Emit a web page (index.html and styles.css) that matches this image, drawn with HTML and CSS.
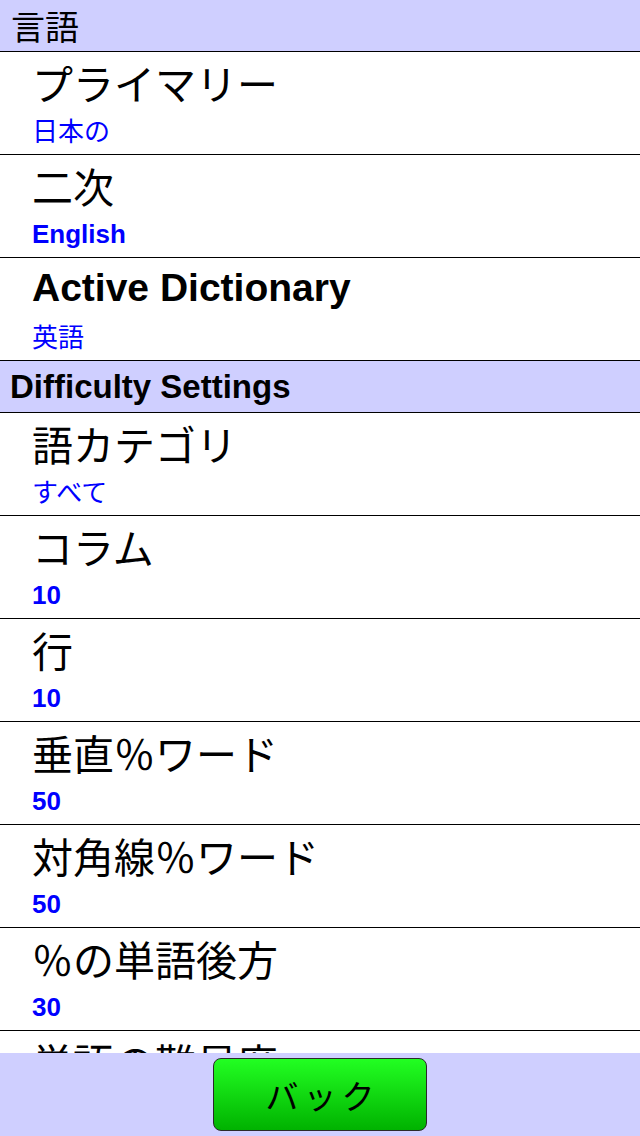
FILE: index.html
```html
<!DOCTYPE html>
<html lang="ja">
<head>
<meta charset="utf-8">
<title>Settings</title>
<link rel="stylesheet" href="styles.css">
</head>
<body>
<div class="list">
  <div class="header jp header-jp">言語</div>
  <div class="row">
    <div class="title jp">プライマリー</div>
    <div class="value jp">日本の</div>
  </div>
  <div class="row">
    <div class="title jp">二次</div>
    <div class="value en">English</div>
  </div>
  <div class="row">
    <div class="title en title-en">Active Dictionary</div>
    <div class="value jp">英語</div>
  </div>
  <div class="header en header-en">Difficulty Settings</div>
  <div class="row">
    <div class="title jp">語カテゴリ</div>
    <div class="value jp">すべて</div>
  </div>
  <div class="row">
    <div class="title jp">コラム</div>
    <div class="value en">10</div>
  </div>
  <div class="row">
    <div class="title jp">行</div>
    <div class="value en">10</div>
  </div>
  <div class="row">
    <div class="title jp">垂直％ワード</div>
    <div class="value en">50</div>
  </div>
  <div class="row">
    <div class="title jp">対角線％ワード</div>
    <div class="value en">50</div>
  </div>
  <div class="row">
    <div class="title jp">％の単語後方</div>
    <div class="value en">30</div>
  </div>
  <div class="row">
    <div class="title jp">単語の難易度</div>
    <div class="value jp">すべて</div>
  </div>
</div>
<div class="footer">
  <button class="back jp" type="button">バック</button>
</div>
</body>
</html>
```

FILE: styles.css
```css
html, body {
  margin: 0;
  padding: 0;
  background: #ffffff;
}

body {
  padding-bottom: 83px;
}

.jp {
  font-family: "Noto Sans CJK JP", "Noto Sans", sans-serif;
  font-weight: 400;
}

.en {
  font-family: "Liberation Sans", Arial, sans-serif;
  font-weight: 700;
}

.list {
  display: flex;
  flex-direction: column;
}

.header {
  height: 51px;
  line-height: 51px;
  background: #cfcfff;
  border-bottom: 1px solid #000;
  color: #000;
  white-space: nowrap;
}

.header-jp {
  font-size: 34px;
  padding-left: 11px;
}

.header-en {
  font-size: 33px;
  padding-left: 10px;
}

.row {
  height: 102px;
  border-bottom: 1px solid #000;
  padding-left: 32px;
  display: flex;
  flex-direction: column;
}

.title {
  height: 50px;
  line-height: 50px;
  margin-top: 5px;
  font-size: 41px;
  color: #000;
  white-space: nowrap;
}

.title-en {
  font-size: 39px;
  margin-top: 5px;
}

.value {
  height: 30px;
  line-height: 30px;
  margin-top: 9px;
  font-size: 26px;
  color: #0000ff;
  white-space: nowrap;
}

.value.jp {
  font-size: 26px;
  margin-top: 8px;
}

.footer {
  position: fixed;
  left: 0;
  right: 0;
  bottom: 0;
  height: 83px;
  background: #cfcfff;
  display: flex;
  justify-content: center;
  align-items: center;
}

.back {
  width: 214px;
  height: 73px;
  margin: 0;
  padding: 0;
  border: 1px solid #2a2a2a;
  border-radius: 8px;
  background: linear-gradient(to bottom, #22ff22, #00b200);
  color: #000;
  font-size: 33px;
  letter-spacing: 5px;
  text-indent: 5px;
}
```
